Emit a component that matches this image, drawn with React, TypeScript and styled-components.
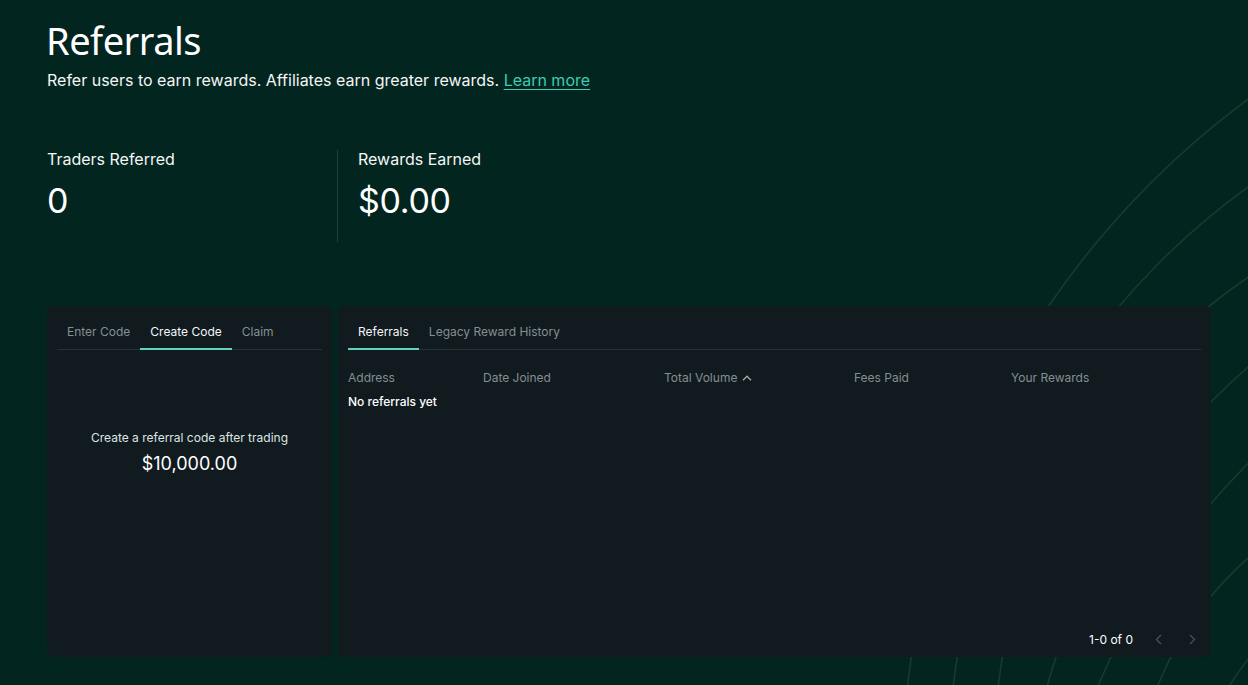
import React, { useState } from "react";
import styled, { createGlobalStyle } from "styled-components";

const GlobalStyle = createGlobalStyle`
  * { box-sizing: border-box; }
  body {
    margin: 0;
    background: #02251f;
    color: #f4f6f6;
    font-family: Inter, "Noto Sans", sans-serif;
  }
`;

const Page = styled.div`
  position: relative;
  min-height: 685px;
  overflow: hidden;
  padding: 14px 37px 28px 47px;
`;

const Backdrop = styled.svg`
  position: absolute;
  inset: 0;
  width: 100%;
  height: 100%;
  pointer-events: none;
  z-index: 0;
`;

const Content = styled.div`
  position: relative;
  z-index: 1;
`;

const Title = styled.h1`
  margin: 0 0 0 -1px;
  font-family: "Noto Sans", "Open Sans", sans-serif;
  font-weight: 400;
  font-size: 38px;
  line-height: 52px;
  letter-spacing: -0.5px;
  color: #ffffff;
`;

const Subtitle = styled.p`
  margin: 2px 0 0;
  font-size: 16px;
  line-height: 24px;
  color: #f4f6f6;

  a {
    color: #3fcbb2;
    text-decoration: underline;
    text-underline-offset: 3px;
  }
`;

const StatsRow = styled.div`
  display: flex;
  margin-top: 58px;
`;

const Stat = styled.div<{ $divider?: boolean }>`
  width: ${(p) => (p.$divider ? "auto" : "290px")};
  height: 92px;
  padding-left: ${(p) => (p.$divider ? "20px" : "0")};
  border-left: ${(p) => (p.$divider ? "1px solid #22403a" : "none")};
  display: flex;
  flex-direction: column;
  gap: 11px;
`;

const StatLabel = styled.div`
  font-size: 16px;
  line-height: 18px;
`;

const StatValue = styled.div`
  font-size: 34px;
  line-height: 44px;
  letter-spacing: -0.3px;
  color: #ffffff;
`;

const Panels = styled.div`
  display: flex;
  gap: 6px;
  height: 351px;
  margin-top: 64px;
`;

const Panel = styled.section<{ $width?: number }>`
  ${(p) => (p.$width ? `width: ${p.$width}px;` : "flex: 1;")}
  background: #101a1f;
  border-radius: 6px;
  padding: 10px 10px 8px;
  display: flex;
  flex-direction: column;
`;

const TabBar = styled.div`
  display: flex;
  height: 34px;
  border-bottom: 1px solid #283134;
`;

const Tab = styled.button<{ $active?: boolean }>`
  background: none;
  border: none;
  margin-bottom: -1px;
  padding: 0 10px 2px;
  font-family: inherit;
  font-size: 12px;
  color: ${(p) => (p.$active ? "#f4f6f6" : "#858e92")};
  border-bottom: 2px solid ${(p) => (p.$active ? "#5fd3c0" : "transparent")};
  cursor: pointer;
`;

const CreateBody = styled.div`
  padding-top: 79px;
  display: flex;
  flex-direction: column;
  align-items: center;
  gap: 6px;
`;

const Hint = styled.div`
  font-size: 12px;
  line-height: 18px;
  color: #dfe4e5;
`;

const Threshold = styled.div`
  font-size: 18px;
  line-height: 22px;
  color: #ffffff;
`;

const Table = styled.div`
  flex: 1;
  padding-top: 19px;
`;

const Row = styled.div`
  display: grid;
  grid-template-columns: 135px 181px 190px 157px 1fr;
  font-size: 12px;
  line-height: 18px;
`;

const HeadCell = styled.div`
  color: #858e92;
  display: flex;
  align-items: center;
  gap: 5px;
`;

const Empty = styled.div`
  margin-top: 6px;
  font-size: 12px;
  line-height: 18px;
  font-weight: 500;
  color: #ffffff;
`;

const Footer = styled.div`
  display: flex;
  align-items: center;
  justify-content: flex-end;
  gap: 17px;
  height: 20px;
  font-size: 12px;
  color: #ffffff;
`;

const PageButton = styled.button`
  width: 17px;
  height: 20px;
  padding: 0;
  background: none;
  border: none;
  display: flex;
  align-items: center;
  justify-content: center;
  color: #465054;
`;

const Chevron = ({ dir }: { dir: "left" | "right" | "up" }) => {
  if (dir === "up")
    return (
      <svg width="10" height="6" viewBox="0 0 10 6" fill="none">
        <path d="M1 5.2L5 1.2L9 5.2" stroke="#a3abae" strokeWidth="1.3" />
      </svg>
    );
  return (
    <svg width="7" height="11" viewBox="0 0 7 11" fill="none">
      <path
        d={dir === "left" ? "M6 1L1.5 5.5L6 10" : "M1 1L5.5 5.5L1 10"}
        stroke="currentColor"
        strokeWidth="1.4"
      />
    </svg>
  );
};

const arcs = [
  { cx: 1750, cy: 783, r: 848 },
  { cx: 1670, cy: 773, r: 722 },
  { cx: 1572, cy: 756, r: 578 },
  { cx: 1682, cy: 863, r: 659 },
  { cx: 1756, cy: 968, r: 716 },
  { cx: 1473, cy: 813, r: 340 },
  { cx: 1560, cy: 900, r: 394 },
];

export default function App() {
  const [codeTab, setCodeTab] = useState("create");
  const [listTab, setListTab] = useState("referrals");

  return (
    <>
      <GlobalStyle />
      <Page>
        <Backdrop viewBox="0 0 1248 685" preserveAspectRatio="xMinYMin slice">
          {arcs.map((a, i) => (
            <circle key={i} cx={a.cx} cy={a.cy} r={a.r} fill="none" stroke="#173a31" strokeWidth="1.6" />
          ))}
        </Backdrop>
        <Content>
          <Title>Referrals</Title>
          <Subtitle>
            Refer users to earn rewards. Affiliates earn greater rewards.{" "}
            <a href="#">Learn more</a>
          </Subtitle>

          <StatsRow>
            <Stat>
              <StatLabel>Traders Referred</StatLabel>
              <StatValue>0</StatValue>
            </Stat>
            <Stat $divider>
              <StatLabel>Rewards Earned</StatLabel>
              <StatValue>$0.00</StatValue>
            </Stat>
          </StatsRow>

          <Panels>
            <Panel $width={285}>
              <TabBar>
                <Tab $active={codeTab === "enter"} onClick={() => setCodeTab("enter")}>Enter Code</Tab>
                <Tab $active={codeTab === "create"} onClick={() => setCodeTab("create")}>Create Code</Tab>
                <Tab $active={codeTab === "claim"} onClick={() => setCodeTab("claim")}>Claim</Tab>
              </TabBar>
              <CreateBody>
                <Hint>Create a referral code after trading</Hint>
                <Threshold>$10,000.00</Threshold>
              </CreateBody>
            </Panel>

            <Panel>
              <TabBar>
                <Tab $active={listTab === "referrals"} onClick={() => setListTab("referrals")}>Referrals</Tab>
                <Tab $active={listTab === "legacy"} onClick={() => setListTab("legacy")}>Legacy Reward History</Tab>
              </TabBar>
              <Table>
                <Row>
                  <HeadCell>Address</HeadCell>
                  <HeadCell>Date Joined</HeadCell>
                  <HeadCell>
                    Total Volume <Chevron dir="up" />
                  </HeadCell>
                  <HeadCell>Fees Paid</HeadCell>
                  <HeadCell>Your Rewards</HeadCell>
                </Row>
                <Empty>No referrals yet</Empty>
              </Table>
              <Footer>
                <span>1-0 of 0</span>
                <PageButton aria-label="Previous page">
                  <Chevron dir="left" />
                </PageButton>
                <PageButton aria-label="Next page">
                  <Chevron dir="right" />
                </PageButton>
              </Footer>
            </Panel>
          </Panels>
        </Content>
      </Page>
    </>
  );
}
